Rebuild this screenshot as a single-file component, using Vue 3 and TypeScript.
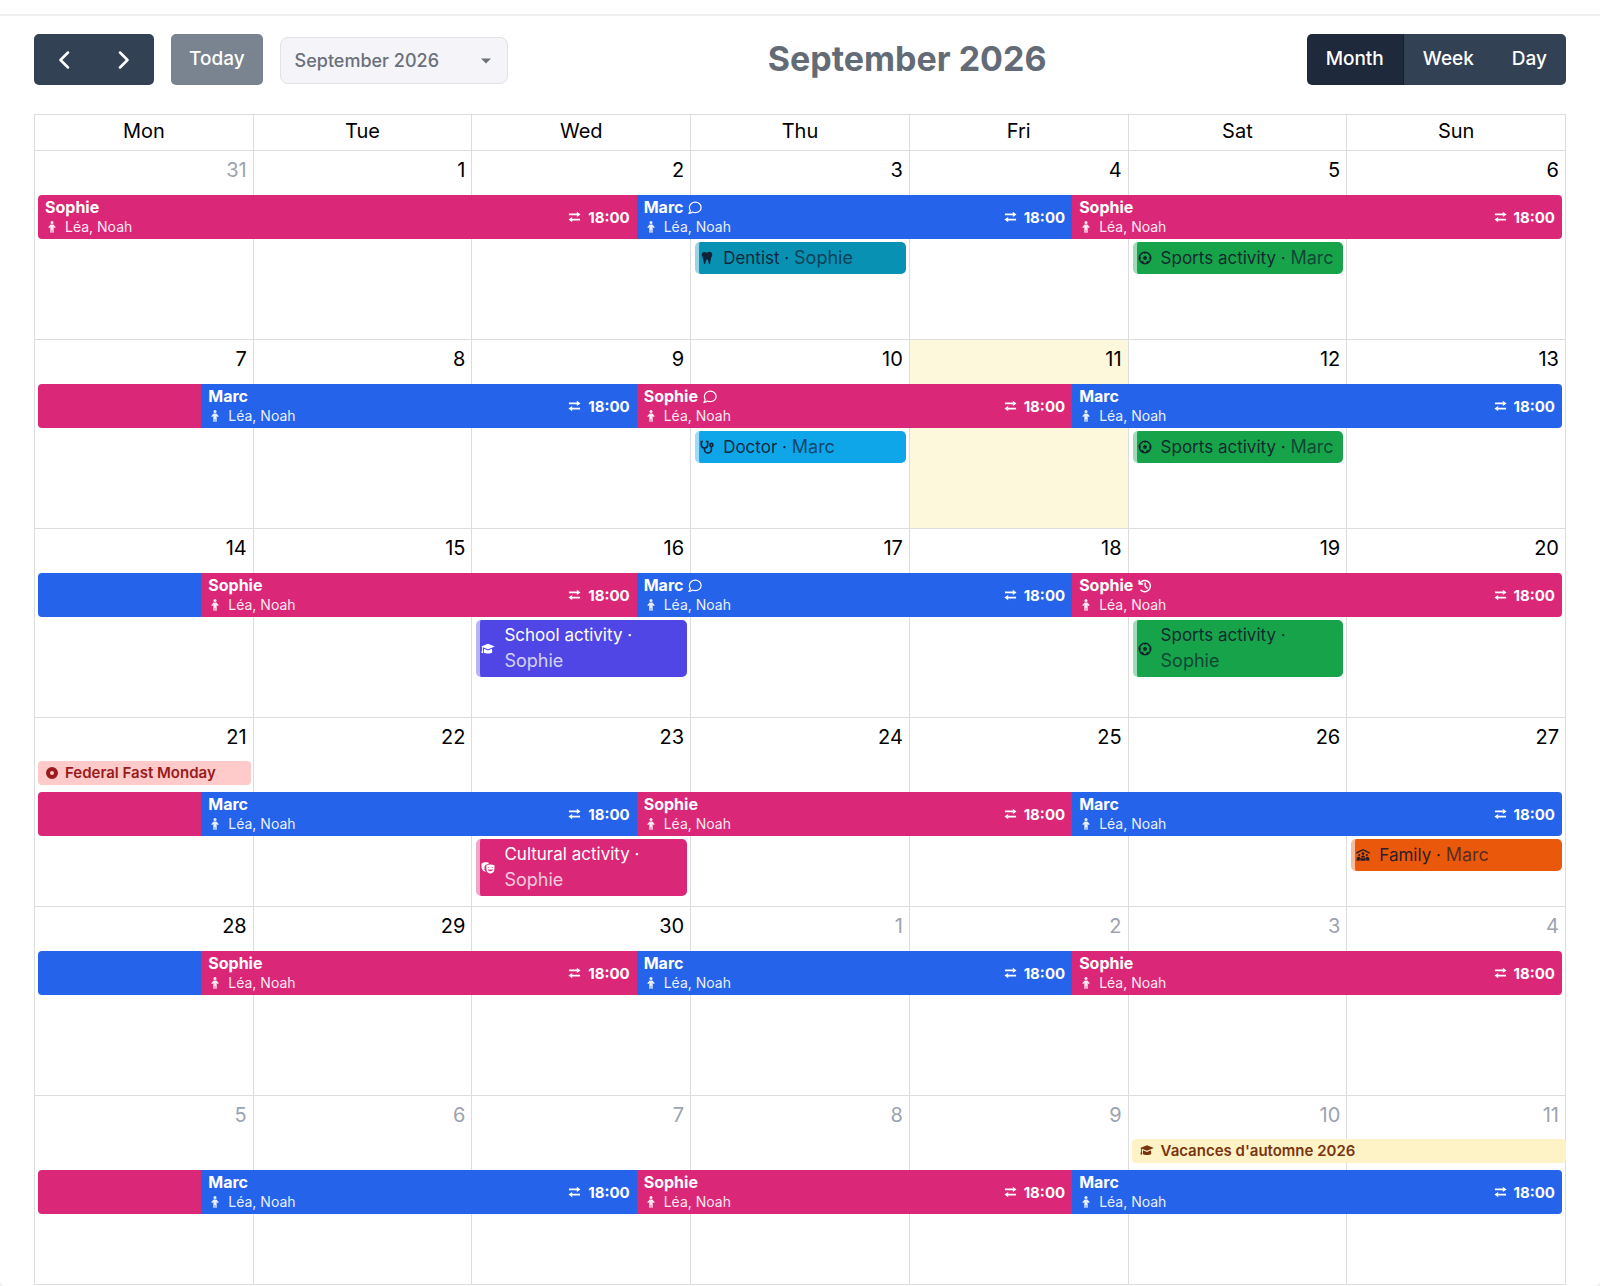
<script setup lang="ts">
import { ref } from 'vue'

type Parent = 'sophie' | 'marc'
type IconName = 'tooth' | 'stethoscope' | 'ball' | 'cap' | 'masks' | 'family'

interface Segment {
  parent: Parent
  span: number
  carried?: boolean
  mark?: 'comment' | 'history'
}
interface Activity {
  day: number
  title: string
  who: string
  kind: 'dentist' | 'doctor' | 'sports' | 'school' | 'cultural' | 'family'
  icon: IconName
}
interface Holiday {
  day: number
  days: number
  title: string
  kind: 'public' | 'vacation'
}
interface Week {
  dates: number[]
  outside: number[]
  today?: number
  segments: Segment[]
  activities: Activity[]
  holiday?: Holiday
}

const names: Record<Parent, string> = { sophie: 'Sophie', marc: 'Marc' }
const weekdays = ['Mon', 'Tue', 'Wed', 'Thu', 'Fri', 'Sat', 'Sun']
const views = ['Month', 'Week', 'Day']
const view = ref('Month')
const month = ref('September 2026')

function rotation(first: Parent, second: Parent, marks: Segment['mark'][] = []): Segment[] {
  return [
    { parent: first, span: 0.75, carried: true },
    { parent: second, span: 2, mark: marks[0] },
    { parent: first, span: 2, mark: marks[1] },
    { parent: second, span: 2.25, mark: marks[2] },
  ]
}

const weeks: Week[] = [
  {
    dates: [31, 1, 2, 3, 4, 5, 6],
    outside: [0],
    segments: [
      { parent: 'sophie', span: 2.75 },
      { parent: 'marc', span: 2, mark: 'comment' },
      { parent: 'sophie', span: 2.25 },
    ],
    activities: [
      { day: 3, title: 'Dentist', who: 'Sophie', kind: 'dentist', icon: 'tooth' },
      { day: 5, title: 'Sports activity', who: 'Marc', kind: 'sports', icon: 'ball' },
    ],
  },
  {
    dates: [7, 8, 9, 10, 11, 12, 13],
    outside: [],
    today: 4,
    segments: rotation('sophie', 'marc', [undefined, 'comment']),
    activities: [
      { day: 3, title: 'Doctor', who: 'Marc', kind: 'doctor', icon: 'stethoscope' },
      { day: 5, title: 'Sports activity', who: 'Marc', kind: 'sports', icon: 'ball' },
    ],
  },
  {
    dates: [14, 15, 16, 17, 18, 19, 20],
    outside: [],
    segments: rotation('marc', 'sophie', [undefined, 'comment', 'history']),
    activities: [
      { day: 2, title: 'School activity', who: 'Sophie', kind: 'school', icon: 'cap' },
      { day: 5, title: 'Sports activity', who: 'Sophie', kind: 'sports', icon: 'ball' },
    ],
  },
  {
    dates: [21, 22, 23, 24, 25, 26, 27],
    outside: [],
    holiday: { day: 0, days: 1, title: 'Federal Fast Monday', kind: 'public' },
    segments: rotation('sophie', 'marc'),
    activities: [
      { day: 2, title: 'Cultural activity', who: 'Sophie', kind: 'cultural', icon: 'masks' },
      { day: 6, title: 'Family', who: 'Marc', kind: 'family', icon: 'family' },
    ],
  },
  {
    dates: [28, 29, 30, 1, 2, 3, 4],
    outside: [3, 4, 5, 6],
    segments: rotation('marc', 'sophie'),
    activities: [],
  },
  {
    dates: [5, 6, 7, 8, 9, 10, 11],
    outside: [0, 1, 2, 3, 4, 5, 6],
    holiday: { day: 5, days: 2, title: "Vacances d'automne 2026", kind: 'vacation' },
    segments: rotation('sophie', 'marc'),
    activities: [],
  },
]

const capPath =
  'M8 1 15.8 4.1 8 7.3 2.1 5v2.300L2.400 11.800.4 11.400C1 9.800 1.200 8 1.100 6.200V4.500L.2 4.100zM3.500 6.700 8 8.600l4.500-1.900.4 3.900c-1.700 2.200-8.100 2.200-9.800 0z'
const toothPath =
  'M186.1 52.1C169.3 39.1 148.7 32 127.5 32C74.7 32 32 74.7 32 127.5l0 6.2c0 15.8 3.7 31.3 10.7 45.5l23.5 47.1c4.5 8.9 7.6 18.4 9.4 28.2l36.7 205.8c2 11.2 11.6 19.4 22.9 19.8s21.4-7.4 24-18.4l28.9-121.3C192.2 323.7 207 312 224 312s31.8 11.7 35.8 28.3l28.9 121.3c2.6 11.1 12.7 18.8 24 18.4s20.9-8.6 22.9-19.8l36.700-205.8c1.8-9.8 4.9-19.3 9.4-28.2l23.5-47.1c7.1-14.1 10.7-29.7 10.7-45.5l0-2.1c0-55-44.6-99.600-99.600-99.600c-24.100 0-47.400 8.800-68.800 27.400z'
</script>

<template>
  <main class="card">
    <header class="toolbar">
      <div class="tools">
        <div class="group">
          <button class="btn arrow" type="button" aria-label="Previous month">
            <svg viewBox="0 0 12 18" aria-hidden="true"><path d="M10 1.5 2.5 9 10 16.5" /></svg>
          </button>
          <button class="btn arrow" type="button" aria-label="Next month">
            <svg viewBox="0 0 12 18" aria-hidden="true"><path d="M2 1.5 9.5 9 2 16.5" /></svg>
          </button>
        </div>
        <button class="btn today-btn" type="button" disabled>Today</button>
        <div class="picker">
          <select v-model="month" aria-label="Month">
            <option>September 2026</option>
            <option>October 2026</option>
          </select>
          <svg viewBox="0 0 10 6" aria-hidden="true"><path d="M0 .5h10L5 5.5z" /></svg>
        </div>
      </div>
      <h1>{{ month }}</h1>
      <div class="group">
        <button
          v-for="v in views"
          :key="v"
          type="button"
          class="btn"
          :class="{ active: v === view }"
          :aria-pressed="v === view"
          @click="view = v"
        >{{ v }}</button>
      </div>
    </header>

    <table class="calendar" :aria-label="month">
      <thead>
        <tr class="weekdays">
          <th v-for="d in weekdays" :key="d" scope="col">{{ d }}</th>
        </tr>
      </thead>
      <tbody>
        <tr v-for="(week, w) in weeks" :key="w" class="week">
          <td v-for="(date, d) in week.dates" :key="d">
            <div
              class="day"
              :class="{ outside: week.outside.includes(d), today: week.today === d }"
              :style="{ gridColumn: d + 1 }"
            >{{ date }}</div>

            <div
              v-if="week.holiday && week.holiday.day === d"
              class="holiday"
              :class="week.holiday.kind"
              :style="{ gridColumn: `${d + 1} / span ${week.holiday.days}` }"
            >
              <svg v-if="week.holiday.kind === 'public'" class="dot" viewBox="0 0 12 12" aria-hidden="true">
                <circle cx="6" cy="6" r="4" />
              </svg>
              <svg v-else class="cap" viewBox="0 0 16 14" aria-hidden="true"><path :d="capPath" /></svg>
              <span>{{ week.holiday.title }}</span>
            </div>

            <div v-if="d === 0" class="bar" :class="{ below: week.holiday }">
              <div
                v-for="(s, i) in week.segments"
                :key="i"
                class="segment"
                :class="s.parent"
                :style="{ flexGrow: s.span }"
              >
                <template v-if="!s.carried">
                  <div class="who">
                    <div class="name">
                      <span>{{ names[s.parent] }}</span>
                      <svg v-if="s.mark === 'comment'" class="mark" viewBox="0 0 14 14" aria-hidden="true">
                        <path d="M7.3 1.2c3.3 0 5.8 2.3 5.8 5.2s-2.5 5.2-5.8 5.2c-1 0-1.9-.2-2.7-.6-1 .8-2.2 1.3-3.7 1.4.8-.9 1.3-1.8 1.4-2.8C1.7 8.7 1.4 7.6 1.4 6.4c0-2.9 2.6-5.2 5.9-5.2z" />
                      </svg>
                      <svg v-if="s.mark === 'history'" class="mark history" viewBox="0 0 14 14" aria-hidden="true">
                        <path d="M1.2 1.5v3.4h3.4M1.7 4.7A5.6 5.6 0 1 1 3 11.2M7.2 4v3.2l2 1.9" />
                      </svg>
                    </div>
                    <div class="kids">
                      <svg viewBox="0 0 8 14" aria-hidden="true">
                        <circle cx="4" cy="2.4" r="1.5" />
                        <path d="M2.6 4.4h2.8L7.8 7.2l-1 .9-1.1-1V12.800H4.300V10h-.6v2.800H2.300V7.100l-1.100 1-1-.9z" />
                      </svg>
                      <span>Léa, Noah</span>
                    </div>
                  </div>
                  <div class="swap">
                    <svg viewBox="0 0 14 12" aria-hidden="true">
                      <path d="M1 3.2h9M13 8.8H4" />
                      <path class="head" d="M9.5.3 13.5 3.2 9.5 6.1zM4.5 5.9.5 8.8l4 2.9z" />
                    </svg>
                    <span>18:00</span>
                  </div>
                </template>
              </div>
            </div>

            <template v-for="a in week.activities" :key="a.title + a.day">
              <div v-if="a.day === d" class="chip" :class="a.kind" :style="{ gridColumn: d + 1 }">
                <svg v-if="a.icon === 'tooth'" viewBox="0 0 448 512" aria-hidden="true"><path :d="toothPath" /></svg>
                <svg v-else-if="a.icon === 'cap'" viewBox="0 0 16 14" aria-hidden="true"><path :d="capPath" /></svg>
                <svg v-else-if="a.icon === 'stethoscope'" class="line" viewBox="0 0 14 14" aria-hidden="true">
                  <path d="M3 1.5H1.3v3.3a3.2 3.2 0 0 0 6.4 0V1.5H6M4.5 8v1.5a3.3 3.3 0 0 0 6.9 0V6.5" />
                  <circle cx="11.4" cy="4.9" r="1.5" />
                </svg>
                <svg v-else-if="a.icon === 'ball'" class="line" viewBox="0 0 14 14" aria-hidden="true">
                  <circle cx="7" cy="7" r="5.7" />
                  <path class="solid" d="M7 4.800l2.100 1.500-.8 2.500H5.700l-.8-2.500zM5.300 1.200h3.400L7 2.900zM12.800 5.500l-.4 3.300-1.500-2zM1.200 5.500l.4 3.300 1.500-2zM3.300 11.700l.5-2.300 2 1.300-.4 2zM10.700 11.700l-.5-2.300-2 1.300.4 2z" />
                </svg>
                <svg v-else-if="a.icon === 'masks'" viewBox="0 0 16 14" aria-hidden="true">
                  <path fill-rule="evenodd" d="M.5 2C2.7.7 5.9.1 8.8 1L8.6 2.3C7 2.5 5.6 3 4.9 3.600l-.3 1.800c-.7-.1-1.500.2-1.800.8.6 0 1.200.1 1.600.3l-.2 1.300c-.7.2-1.100.8-1.200 1.500.4-.2.900-.3 1.400-.2.200.9.500 1.600 1 2.200C2.700 10.600.8 8.800.6 6.700zM6 4.200c2.600-1.500 6.900-1.500 9.500 0l-.3 5c-.3 2.400-2.300 4.100-4.500 4.100s-4.200-1.700-4.500-4.100zM7.600 6.700h2.200c-.3-1.200-1.900-1.200-2.200 0zm4.100 0h2.200c-.3-1.200-1.900-1.200-2.200 0zM7.900 8.500c.4 2.900 5.200 2.900 5.700 0-1.700.7-4 .7-5.700 0z" />
                </svg>
                <svg v-else viewBox="0 0 16 14" aria-hidden="true">
                  <path d="M8 .2l7.600 3.700c.4.200.5.600.3 1-.2.300-.6.400-1 .3L8 1.900 1.100 5.200c-.4.100-.8 0-1-.3-.2-.4-.1-.8.300-1z" />
                  <circle cx="8" cy="5.4" r="1.5" /><circle cx="3.6" cy="7" r="1.2" /><circle cx="12.4" cy="7" r="1.2" />
                  <path d="M5.500 9.800C5.600 8.300 6.700 7.500 8 7.500s2.400.8 2.500 2.300zM.8 13.600v-2.200c0-1.600 1-2.500 2.300-2.500.9 0 1.500.5 1.600 1.700h6.600c.1-1.200.7-1.700 1.600-1.700 1.300 0 2.300.9 2.300 2.500v2.200h-3.400v-1.400h-1v1.400H5.200v-1.400h-1v1.400z" />
                </svg>
                <div class="text">{{ a.title }} · <span>{{ a.who }}</span></div>
              </div>
            </template>
          </td>
        </tr>
      </tbody>
    </table>
  </main>
</template>

<style>
body {
  margin: 0;
  background: #f0f0f2;
}
</style>

<style scoped>
.card {
  box-sizing: border-box;
  min-height: 100vh;
  padding: 20px 34px 1px;
  background: #fff;
  border-radius: 0 0 6px 6px;
  font-family: Inter, 'Liberation Sans', sans-serif;
  font-size: 20px;
  color: #000;
}
.card::before {
  content: '';
  display: block;
  height: 2px;
  margin: -6px -34px 18px;
  background: #f0f0f1;
}
.toolbar {
  display: flex;
  justify-content: space-between;
  align-items: center;
  height: 51px;
  margin-bottom: 29px;
}
.tools {
  display: flex;
  align-items: center;
  gap: 17px;
}
.group {
  display: flex;
  border-radius: 5px;
  overflow: hidden;
}
.btn {
  box-sizing: border-box;
  height: 51px;
  padding: 0 19px 2px;
  border: 0;
  background: #334155;
  color: #fff;
  font: 500 19px/28px Inter, 'Liberation Sans', sans-serif;
}
.btn.active {
  border-right: 1px solid #151e2e;
  background: #1e293b;
}
.arrow {
  display: grid;
  place-items: center;
  width: 60px;
  padding: 0;
}
.arrow svg {
  width: 12px;
  height: 18px;
  fill: none;
  stroke: currentColor;
  stroke-width: 2.5;
  stroke-linecap: round;
  stroke-linejoin: round;
}
.today-btn {
  padding: 0 18px 2px;
  border-radius: 5px;
  background: #7a8490;
}
.picker {
  display: grid;
  align-items: center;
  padding-top: 2px;
}
.picker > * {
  grid-area: 1 / 1;
}
.picker select {
  appearance: none;
  width: 228px;
  height: 47px;
  padding: 0 14px;
  border: 1px solid #e2e2e6;
  border-radius: 8px;
  background: #f4f4f9;
  color: #6b7079;
  font: 500 18px/28px Inter, 'Liberation Sans', sans-serif;
}
.picker svg {
  justify-self: end;
  width: 10px;
  height: 6px;
  margin-right: 17px;
  fill: #6b7079;
  pointer-events: none;
}
h1 {
  margin: 0;
  padding-bottom: 2px;
  color: #636c76;
  font-size: 34px;
  line-height: 48px;
  font-weight: 700;
}
.calendar,
.calendar thead,
.calendar tbody {
  display: block;
}
.calendar {
  border: solid #ddd;
  border-width: 1px 0 0 1px;
}
.weekdays,
.week {
  display: grid;
  grid-template-columns: repeat(7, minmax(0, 1fr));
}
.weekdays th {
  padding: 2px 0 5px;
  border: solid #ddd;
  border-width: 0 1px 1px 0;
  font-weight: 400;
  line-height: 28px;
}
.week {
  grid-template-rows: 43px auto auto auto 1fr;
  min-height: 189px;
}
.week td {
  display: contents;
}
.day {
  grid-row: 1 / -1;
  padding: 5px 6px;
  border: solid #ddd;
  border-width: 0 1px 1px 0;
  line-height: 28px;
  text-align: right;
}
.day.outside {
  color: #9ca3af;
}
.day.today {
  background: #fdf7dc;
}
.holiday {
  z-index: 1;
  grid-row: 2;
  box-sizing: border-box;
  display: flex;
  align-items: center;
  height: 24px;
  margin: 0 3px;
  padding: 0 8px 1px;
  gap: 7px;
  border-radius: 4px;
  font-size: 15px;
  font-weight: 600;
  white-space: nowrap;
}
.holiday.public {
  background: #fecaca;
  color: #991b1b;
}
.holiday.vacation {
  margin-right: 0;
  background: #fef2c7;
  color: #78350f;
}
.dot {
  width: 12px;
  height: 12px;
  fill: none;
  stroke: currentColor;
  stroke-width: 4;
}
.cap {
  width: 14px;
  height: 13px;
  fill: currentColor;
}
.bar {
  z-index: 1;
  grid-row: 3;
  grid-column: 1 / -1;
  display: flex;
  height: 44px;
  margin: 1px 4px 0 3px;
  border-radius: 4px;
  overflow: hidden;
}
.bar.below {
  margin-top: 7px;
}
.segment {
  display: flex;
  flex: 1 1 0;
  min-width: 0;
  box-sizing: border-box;
  justify-content: space-between;
  align-items: center;
  color: #fff;
}
.sophie {
  background: #db2777;
}
.marc {
  background: #2563eb;
}
.who {
  padding-left: 7px;
}
.name,
.kids,
.swap {
  display: flex;
  align-items: center;
  line-height: 19px;
}
.name {
  gap: 5px;
  font-size: 16px;
  font-weight: 700;
}
.mark {
  width: 14px;
  height: 14px;
  fill: none;
  stroke: currentColor;
  stroke-width: 1.2;
  stroke-linecap: round;
  stroke-linejoin: round;
}
.history {
  stroke-width: 1.5;
}
.kids {
  gap: 9px;
  font-size: 14px;
  opacity: 0.9;
}
.kids svg {
  width: 8px;
  height: 14px;
  margin-left: 3px;
  fill: currentColor;
}
.swap {
  gap: 7px;
  padding-right: 7px;
  font-size: 15px;
  font-weight: 700;
}
.swap svg {
  width: 13px;
  height: 12px;
  fill: none;
  stroke: currentColor;
  stroke-width: 1.7;
}
.swap .head {
  fill: currentColor;
  stroke: none;
}
.chip {
  z-index: 1;
  grid-row: 4;
  align-self: start;
  display: flex;
  align-items: center;
  gap: 9px;
  margin: 3px 4px 0;
  padding: 3px 4px 3px 1px;
  border-left: 4px solid rgba(255, 255, 255, 0.6);
  border-radius: 5px;
  color: rgba(15, 23, 42, 0.9);
  font-size: 17px;
  line-height: 25px;
}
.chip svg {
  flex: none;
  width: 14px;
  height: 14px;
  fill: currentColor;
}
.chip svg.line {
  fill: none;
  stroke: currentColor;
  stroke-width: 1.6;
}
.chip svg .solid {
  fill: currentColor;
  stroke: none;
}
.text span {
  font-size: 18px;
  opacity: 0.75;
}
.dentist {
  background-color: #0891b2;
}
.doctor {
  background-color: #0ea5e9;
}
.sports {
  background-color: #16a34a;
}
.family {
  background-color: #ea580c;
}
.school {
  background-color: #4f46e5;
  color: #fff;
}
.cultural {
  background-color: #db2777;
  color: #fff;
}
</style>
